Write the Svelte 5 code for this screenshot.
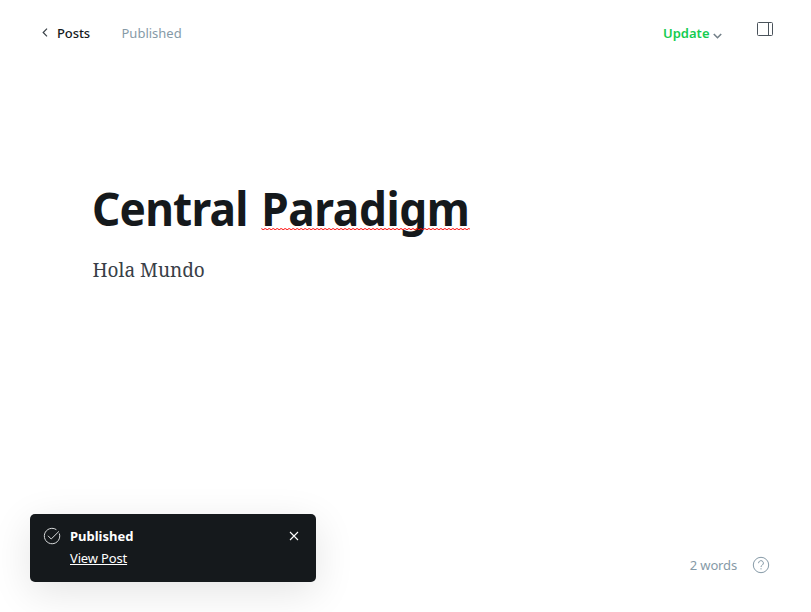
<script>
  const status = 'Published';
  const wave = Array.from({ length: 106 }, (_, i) => `${i * 2},${i % 2 ? 1.7 : 0.5}`).join(' ');
</script>

<div class="editor">
  <header>
    <nav>
      <a class="back" href="#posts"><svg width="6" height="9" viewBox="0 0 6 9"><path d="M5 .7 1.2 4.5 5 8.3" /></svg><span class="posts">Posts</span></a>
      <span class="state">{status}</span>
    </nav>
    <div class="actions">
      <button class="update"><span>Update</span><svg width="9" height="6" viewBox="0 0 9 6"><path d="M.8 1 4.5 4.7 8.2 1" /></svg></button>
      <button class="panel" aria-label="Settings"><svg width="16" height="14" viewBox="0 0 16 14"><rect x=".5" y=".5" width="15" height="13" rx="1" /><path d="M11.5.5v13" /></svg></button>
    </div>
  </header>
  <main>
    <h1><span class="first">Central</span><span class="second">Paradigm<svg class="wave" width="222" height="2" viewBox="0 0 209 2" preserveAspectRatio="none"><polyline points={wave} /></svg></span></h1>
    <p>Hola Mundo</p>
  </main>
  <footer>
    <aside>
      <svg class="check" width="18" height="18" viewBox="0 0 18 18"><path d="M16.3 6.5A7.7 7.7 0 1 1 13.4 2.7M5 8.8l3.2 3.2 7.7-7.6" /></svg>
      <div class="message"><strong>{status}</strong><a href="#post">View Post</a></div>
      <button class="close" aria-label="Close"><svg width="10" height="10" viewBox="0 0 10 10"><path d="m1 1 8 8M9 1 1 9" /></svg></button>
    </aside>
    <div class="info"><span class="words">2 words</span><svg width="18" height="18" viewBox="0 0 18 18"><circle cx="9" cy="9" r="7.7" /><path d="M6.6 7.2a2.4 2.4 0 1 1 3.8 1.8C9.5 9.6 9 9.9 9 11M9 12.2v1.2" /></svg></div>
  </footer>
</div>

<style>
  .editor { box-sizing: border-box; width: 811px; height: 612px; background: #fff; color: #15191c; font: 13px/20px "Noto Sans", sans-serif; display: flex; flex-direction: column; overflow: hidden; }
  svg { display: block; fill: none; stroke: currentColor; flex: none; }
  button { border: 0; padding: 0; background: none; color: inherit; font: inherit; }
  a { color: inherit; }
  header { display: flex; justify-content: space-between; height: 68px; padding: 0 38px 0 42px; box-sizing: border-box; }
  nav, .actions { display: flex; }
  .back { display: flex; text-decoration: none; padding-top: 23px; height: 20px; font-weight: 500; }
  .posts { letter-spacing: -.1px; }
  .back svg { margin: 5px 9px 0 0; stroke-width: 1.2; color: #394047; }
  .state { margin: 23px 0 0 31.5px; color: #869aa7; }
  .update { display: flex; color: #14cc50; font-weight: 600; height: 20px; margin-top: 23px; }
  .update svg { margin: 10px 0 0 3px; color: #738089; stroke-width: 1.6; }
  .panel { margin: 22px 0 0 35.5px; height: 14px; color: #4a535b; }
  main { flex: 1; padding: 114px 0 0 92px; }
  h1 { margin: 0; height: 56px; font-size: 47px; line-height: 52px; font-weight: 700; display: flex; transform: scaleX(.94); transform-origin: left top; }
  .first { width: 180px; letter-spacing: -.85px; }
  .second { position: relative; letter-spacing: -.4px; }
  .wave { position: absolute; left: 0; top: 46px; color: #f00; }
  p { margin: 19px 0 0 .5px; font: 19px/26px "Noto Serif", "Liberation Serif", serif; color: #394047; }
  footer { height: 98px; display: flex; justify-content: space-between; padding: 0 41px 0 30px; }
  aside { box-sizing: border-box; width: 286px; height: 68px; border-radius: 5px; background: #15191c; color: #fff; display: flex; padding: 12px 17px 0 13px; box-shadow: 0 10px 40px #0000001c; font-size: 13px; }
  .check { margin-top: 1px; color: #d9dbdc; }
  .message { margin-left: 9px; flex: 1; display: flex; flex-direction: column; align-items: flex-start; gap: 2px; }
  .message a { letter-spacing: -.15px; }
  .close { height: 10px; margin-top: 5px; }
  .close svg { stroke-width: 1.1; }
  .info { display: flex; gap: 15px; padding-top: 41px; color: #869aa7; height: 20px; }
  .words { letter-spacing: -.15px; }
  .info svg { margin-top: 1px; }
</style>
